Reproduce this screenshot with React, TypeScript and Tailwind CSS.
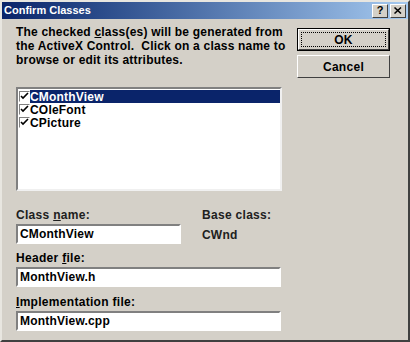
const CLASSES = [
  { id: 0, name: "CMonthView", selected: true },
  { id: 1, name: "COleFont", selected: false },
  { id: 2, name: "CPicture", selected: false },
];

function Check() {
  return (
    <span className="w-[11px] h-[11px] bg-white border-t border-l border-[#808080] border-r border-b border-r-white border-b-white flex items-center justify-center shrink-0">
      <svg width="9" height="9" viewBox="0 0 9 9">
        <path d="M1 4 L3 6 L8 1" stroke="#000" strokeWidth="1.6" fill="none" />
      </svg>
    </span>
  );
}

function Field({ value, w }: { value: string; w: string }) {
  return (
    <div
      className={`${w} h-[20px] bg-white border-2 border-t-[#808080] border-l-[#808080] border-r-white border-b-white flex items-center px-[2px]`}
    >
      <span className="text-[12px] font-bold text-black tracking-[0.2px]">{value}</span>
    </div>
  );
}

export default function App() {
  return (
    <div
      className="w-[410px] h-[342px] bg-[#d4d0c8] border-2 border-t-[#e8e6e0] border-l-[#e8e6e0] border-r-[#404040] border-b-[#404040] flex flex-col text-black"
      style={{ fontFamily: '"Liberation Sans", Arial, sans-serif' }}
    >
      {/* title bar */}
      <div className="h-[17px] flex items-center justify-between bg-gradient-to-r from-[#0a246a] to-[#a6caf0] pl-[2px] pr-[2px]">
        <span className="text-white text-[11px] font-bold">Confirm Classes</span>
        <div className="flex gap-[2px]">
          <span className="w-[16px] h-[14px] bg-[#d4d0c8] border border-t-white border-l-white border-r-[#404040] border-b-[#404040] flex items-center justify-center text-[11px] font-bold leading-none">?</span>
          <span className="w-[16px] h-[14px] bg-[#d4d0c8] border border-t-white border-l-white border-r-[#404040] border-b-[#404040] flex items-center justify-center">
            <svg width="8" height="7" viewBox="0 0 8 7">
              <path d="M0.5 0.5 L7 6.5 M7 0.5 L0.5 6.5" stroke="#000" strokeWidth="1.5" />
            </svg>
          </span>
        </div>
      </div>

      <div className="flex pl-[14px]">
        <div className="w-[266px] flex flex-col">
          <p className="mt-[6px] text-[12px] font-bold leading-[14px] tracking-[0.2px] whitespace-nowrap">
            The checked <span className="underline">c</span>lass(es) will be generated from
            <br />
            the ActiveX Control.&nbsp; Click on a class name to
            <br />
            browse or edit its attributes.
          </p>

          {/* list box */}
          <div className="mt-[20px] h-[104px] bg-white border-2 border-t-[#808080] border-l-[#808080] border-r-[#f0f0f0] border-b-[#f0f0f0] pt-[1px] pl-[1px]">
            {CLASSES.map((c) => (
              <div key={c.id} className="h-[13px] flex items-center">
                <Check />
                <span
                  className={`flex-1 h-[13px] flex items-center text-[12px] font-bold leading-none tracking-[0.2px] ${
                    c.selected ? "bg-[#0a246a] text-white" : "text-black"
                  }`}
                >
                  {c.name}
                </span>
              </div>
            ))}
          </div>

          <div className="mt-[17px] flex">
            <div className="w-[186px] flex flex-col">
              <span className="text-[12px] font-bold leading-[14px] tracking-[0.3px] text-[#202020]">
                Class <span className="underline">n</span>ame:
              </span>
              <div className="mt-[2px]">
                <Field value="CMonthView" w="w-[165px]" />
              </div>
            </div>
            <div className="flex flex-col">
              <span className="text-[12px] font-bold leading-[14px] tracking-[0.3px] text-[#202020]">Base class:</span>
              <span className="mt-[6px] text-[12px] font-bold leading-[14px] tracking-[0.2px] text-[#202020]">CWnd</span>
            </div>
          </div>

          <span className="mt-[7px] text-[12px] font-bold leading-[14px] tracking-[0.3px]">
            Header <span className="underline">f</span>ile:
          </span>
          <div className="mt-[2px]">
            <Field value="MonthView.h" w="w-[265px]" />
          </div>

          <span className="mt-[8px] text-[12px] font-bold leading-[14px] tracking-[0.3px]">
            <span className="underline">I</span>mplementation file:
          </span>
          <div className="mt-[2px]">
            <Field value="MonthView.cpp" w="w-[265px]" />
          </div>
        </div>

        {/* buttons */}
        <div className="ml-[15px] mt-[9px] flex flex-col gap-[4px]">
          <div className="w-[93px] h-[23px] border border-black">
            <div className="w-full h-full border border-t-white border-l-white border-r-[#404040] border-b-[#404040] flex items-center justify-center p-[2px]">
              <div className="w-full h-full border border-dotted border-black flex items-center justify-center text-[12px] font-bold tracking-[0.3px]">
                OK
              </div>
            </div>
          </div>
          <div className="w-[93px] h-[23px] border border-t-white border-l-white border-r-[#404040] border-b-[#404040] flex items-center justify-center text-[12px] font-bold tracking-[0.3px]">
            Cancel
          </div>
        </div>
      </div>
    </div>
  );
}
